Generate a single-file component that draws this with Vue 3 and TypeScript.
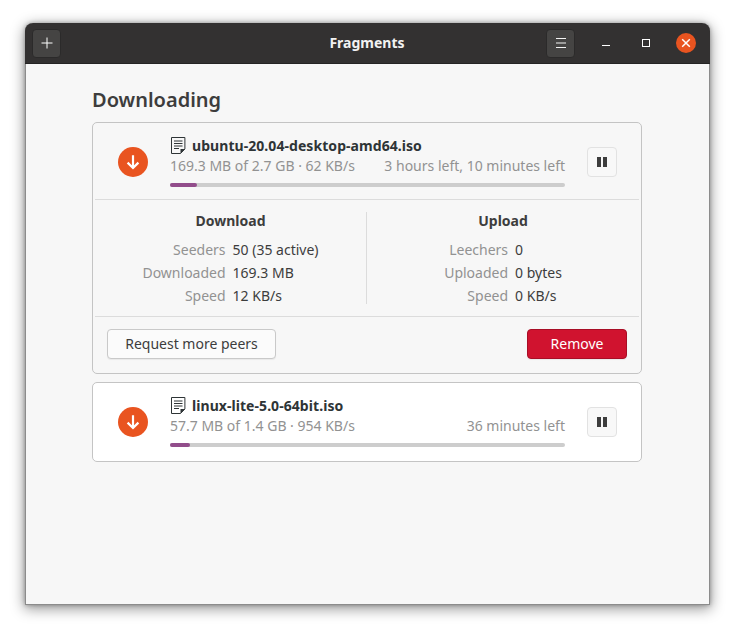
<template>
  <div class="window">
    <header class="titlebar">
      <button class="head-btn" title="Add">
        <svg width="14" height="14" viewBox="0 0 14 14"><path d="M7 1.5v11M1.5 7h11" stroke="#fff" stroke-width="1" fill="none" /></svg>
      </button>
      <div class="title">Fragments</div>
      <button class="head-btn menu-btn" title="Menu">
        <svg width="12" height="12" viewBox="0 0 12 12"><path d="M1 1.5h10M1 6h10M1 10.5h10" stroke="#f4f4f4" stroke-width="1" fill="none" /></svg>
      </button>
      <div class="win-controls">
        <span class="win-btn"><span class="min-line"></span></span>
        <span class="win-btn"><span class="max-box"></span></span>
        <span class="close-btn">
          <svg width="10" height="10" viewBox="0 0 10 10"><path d="M1.2 1.2l7.6 7.6M8.8 1.2L1.2 8.8" stroke="#fff" stroke-width="1.5" fill="none" /></svg>
        </span>
      </div>
    </header>

    <main class="content">
      <h1 class="group-title">Downloading</h1>

      <section v-for="item in torrents" :key="item.name" class="card" :class="{ white: !item.details }">
        <div class="torrent-row">
          <span class="state-icon">
            <svg width="16" height="16" viewBox="0 0 16 16"><path d="M8 1.2v12.4M2.6 8.6L8 14l5.4-5.4" stroke="#fff" stroke-width="2.2" fill="none" /></svg>
          </span>
          <div class="info">
            <div class="name-line">
              <svg class="file-icon" width="15" height="17" viewBox="0 0 15 17">
                <path d="M.5.5h13.4v11.5l-4.4 4.5H.5z" fill="none" stroke="#2e3436" />
                <path d="M3 4h8.5M3 6.5h8.5M3 9h8.5M3 11.5h5" stroke="#2e3436" fill="none" />
                <path d="M9.5 16.5V12h4.4z" fill="#2e3436" />
              </svg>
              <span class="file-name">{{ item.name }}</span>
            </div>
            <div class="meta-line">
              <span>{{ item.progressText }}</span>
              <span>{{ item.timeLeft }}</span>
            </div>
            <div class="progress">
              <div class="progress-fill" :style="{ width: item.percent + '%' }"></div>
            </div>
          </div>
          <button class="pause-btn" title="Pause">
            <svg width="10" height="10" viewBox="0 0 10 10"><path d="M0 0h4v10H0zM6 0h4v10H6z" fill="#3d3d3d" /></svg>
          </button>
        </div>

        <template v-if="item.details">
          <div class="details">
            <div v-for="col in item.details" :key="col.title" class="detail-col">
              <h2 class="col-title">{{ col.title }}</h2>
              <div class="col-grid">
                <template v-for="row in col.rows" :key="row[0]">
                  <span class="key">{{ row[0] }}</span>
                  <span class="val">{{ row[1] }}</span>
                </template>
              </div>
            </div>
          </div>
          <div class="actions">
            <button class="btn">Request more peers</button>
            <button class="btn danger">Remove</button>
          </div>
        </template>
      </section>
    </main>
  </div>
</template>

<script setup lang="ts">
interface DetailColumn {
  title: string;
  rows: [string, string][];
}

interface Torrent {
  name: string;
  progressText: string;
  timeLeft: string;
  percent: number;
  details?: DetailColumn[];
}

const torrents: Torrent[] = [
  {
    name: 'ubuntu-20.04-desktop-amd64.iso',
    progressText: '169.3 MB of 2.7 GB · 62 KB/s',
    timeLeft: '3 hours left, 10 minutes left',
    percent: 6.8,
    details: [
      {
        title: 'Download',
        rows: [
          ['Seeders', '50 (35 active)'],
          ['Downloaded', '169.3 MB'],
          ['Speed', '12 KB/s']
        ]
      },
      {
        title: 'Upload',
        rows: [
          ['Leechers', '0'],
          ['Uploaded', '0 bytes'],
          ['Speed', '0 KB/s']
        ]
      }
    ]
  },
  {
    name: 'linux-lite-5.0-64bit.iso',
    progressText: '57.7 MB of 1.4 GB · 954 KB/s',
    timeLeft: '36 minutes left',
    percent: 5
  }
];
</script>

<style>
html,
body {
  margin: 0;
  background: #fff;
}
</style>

<style scoped>
.window {
  box-sizing: border-box;
  width: 685px;
  height: 582px;
  margin: 23px 0 28px 25px;
  display: flex;
  flex-direction: column;
  background: #f7f7f7;
  border: 1px solid #8c8c8c;
  border-top: none;
  border-radius: 8px 8px 0 0;
  box-shadow: 0 3px 14px 1px rgba(0, 0, 0, 0.4), 0 0 4px rgba(0, 0, 0, 0.3);
  font-family: "Noto Sans", "Open Sans", sans-serif;
  color: #3d3d3d;
}

.titlebar {
  height: 41px;
  margin: 0 -1px;
  flex: none;
  display: flex;
  align-items: center;
  padding: 0 14px 0 7px;
  background: #333131;
  border-radius: 8px 8px 0 0;
  border-bottom: 1px solid #252424;
  box-sizing: border-box;
}

.head-btn {
  width: 29px;
  height: 29px;
  padding: 0;
  display: flex;
  align-items: center;
  justify-content: center;
  background: #454443;
  border: 1px solid #2b2a2a;
  border-radius: 4px;
}

.title {
  flex: 1;
  padding: 0 0 2px 127px;
  text-align: center;
  color: #f2f2f2;
  font-size: 14px;
  font-weight: 700;
}

.menu-btn {
  margin-right: 23px;
}

.win-controls {
  display: flex;
  align-items: center;
  gap: 24px;
}

.win-btn {
  width: 16px;
  height: 16px;
  display: flex;
  align-items: center;
  justify-content: center;
}

.min-line {
  width: 8px;
  height: 1px;
  margin-top: 5px;
  background: #fff;
}

.max-box {
  box-sizing: border-box;
  width: 8px;
  height: 8px;
  border: 1px solid #fff;
}

.close-btn {
  width: 20px;
  height: 20px;
  margin-left: -2px;
  display: flex;
  align-items: center;
  justify-content: center;
  border-radius: 50%;
  background: #e95420;
}

.content {
  padding: 0 67px 0 66px;
}

.group-title {
  margin: 0;
  height: 58px;
  padding-top: 22px;
  box-sizing: border-box;
  font-size: 20px;
  line-height: 28px;
  font-weight: 600;
  color: #3d3d3d;
}

.card {
  box-sizing: border-box;
  margin-bottom: 8px;
  border: 1px solid #c4c4c4;
  border-radius: 5px;
  background: #f7f7f7;
}

.card.white {
  background: #fff;
}

.torrent-row {
  height: 76px;
  display: flex;
  align-items: flex-start;
  padding: 0 24px 0 25px;
  box-sizing: border-box;
}

.card.white .torrent-row {
  height: 78px;
}

.state-icon {
  flex: none;
  width: 30px;
  height: 30px;
  margin: 24px 22px 0 0;
  display: flex;
  align-items: center;
  justify-content: center;
  border-radius: 50%;
  background: #e95420;
}

.info {
  width: 395px;
  flex: none;
  margin-top: 12px;
}

.name-line {
  display: flex;
  align-items: center;
  gap: 6px;
  height: 20px;
  padding-left: 1px;
}

.file-icon {
  flex: none;
}

.file-name {
  font-size: 14px;
  font-weight: 700;
  color: #2e3436;
  letter-spacing: 0.06px;
}

.meta-line {
  display: flex;
  justify-content: space-between;
  height: 21px;
  line-height: 21px;
  font-size: 14px;
  color: #929292;
}

.progress {
  height: 4px;
  margin-top: 7px;
  border-radius: 2px;
  background: #cdcdcd;
}

.progress-fill {
  height: 100%;
  border-radius: 2px;
  background: #924d8b;
}

.pause-btn {
  width: 30px;
  height: 30px;
  margin: 24px 0 0 22px;
  padding: 0;
  display: flex;
  align-items: center;
  justify-content: center;
  background: #f8f8f8;
  border: 1px solid #e2e2e2;
  border-radius: 4px;
}

.details {
  margin: 0 2px;
  padding: 12px 0;
  display: grid;
  grid-template-columns: 271px 1fr;
  border-top: 1px solid #dcdcdc;
  border-bottom: 1px solid #dcdcdc;
}

.detail-col {
  height: 92px;
}

.detail-col + .detail-col {
  border-left: 1px solid #dcdcdc;
}

.col-title {
  margin: -1px 0 10px;
  height: 19px;
  font-size: 14px;
  line-height: 19px;
  font-weight: 700;
  text-align: center;
  color: #3d3d3d;
}

.col-grid {
  display: grid;
  grid-template-columns: max-content max-content;
  justify-content: center;
  column-gap: 7px;
  row-gap: 3px;
  font-size: 14px;
  line-height: 20px;
}

.key {
  text-align: right;
  color: #929292;
}

.val {
  color: #3d3d3d;
}

.actions {
  display: flex;
  justify-content: space-between;
  padding: 12px 14px 14px;
}

.btn {
  height: 30px;
  width: 169px;
  padding: 0 0 2px;
  font-family: inherit;
  font-size: 14px;
  color: #3d3d3d;
  background: #fbfbfb;
  border: 1px solid #c9c9c9;
  border-radius: 4px;
  box-shadow: 0 1px 1px rgba(0, 0, 0, 0.06);
}

.btn.danger {
  width: 100px;
  color: #fff;
  background: #d0132f;
  border-color: #a80e26;
}
</style>
